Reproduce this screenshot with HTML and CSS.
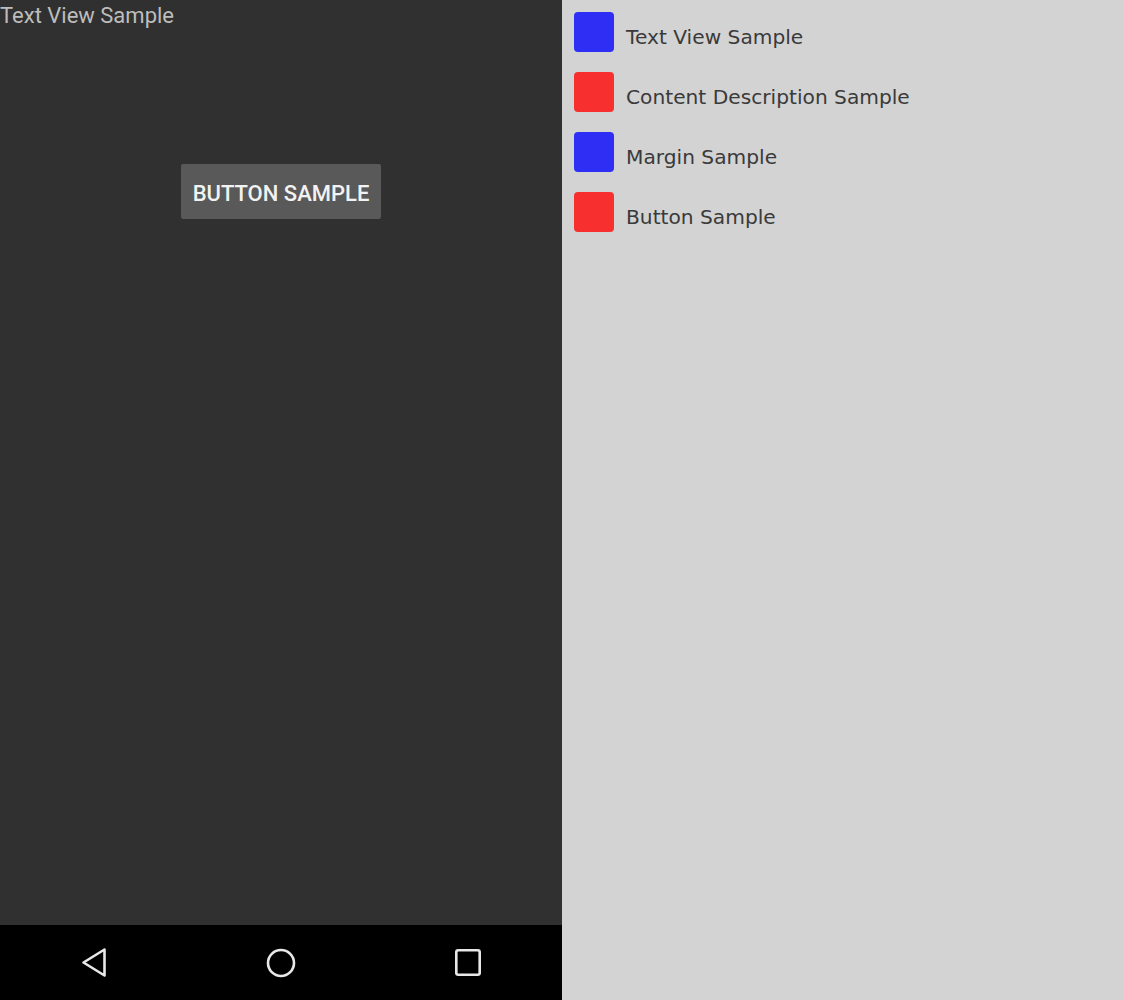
FILE: index.html
```html
<!DOCTYPE html>
<html>
<head>
<meta charset="utf-8">
<link rel="stylesheet" href="styles.css">
</head>
<body>
<div class="app">
  <div class="device">
    <div class="screen">
      <div class="tv">Text View Sample</div>
      <div class="btn-row"><button class="btn">BUTTON SAMPLE</button></div>
    </div>
    <div class="navbar">
      <svg class="nav-icon" width="26" height="31" viewBox="0 0 26 31"><path d="M23.5 2.5 L2.5 15.5 L23.5 28.5 Z" fill="none" stroke="#e8e8e8" stroke-width="2.6" stroke-linejoin="round"/></svg>
      <svg class="nav-icon" width="30" height="30" viewBox="0 0 30 30"><circle cx="15" cy="15" r="13" fill="none" stroke="#e8e8e8" stroke-width="2.6"/></svg>
      <svg class="nav-icon" width="26" height="27" viewBox="0 0 26 27"><rect x="1.3" y="1.3" width="23.4" height="24.4" rx="2" fill="none" stroke="#e8e8e8" stroke-width="2.6"/></svg>
    </div>
  </div>
  <div class="panel">
    <div class="item"><span class="swatch blue"></span><span class="label">Text View Sample</span></div>
    <div class="item"><span class="swatch red"></span><span class="label">Content Description Sample</span></div>
    <div class="item"><span class="swatch blue"></span><span class="label">Margin Sample</span></div>
    <div class="item"><span class="swatch red"></span><span class="label">Button Sample</span></div>
  </div>
</div>
</body>
</html>
```
FILE: styles.css
```css
html, body { margin: 0; padding: 0; }
body { width: 1124px; height: 1000px; overflow: hidden; }
.app { display: flex; width: 1124px; height: 1000px; }
.device { width: 562px; display: flex; flex-direction: column; background: #303030; }
.screen { flex: 1; display: flex; flex-direction: column; }
.tv { font-family: Roboto, sans-serif; font-size: 22px; line-height: 32px; height: 32px; color: #bdbdbd; }
.btn-row { display: flex; justify-content: center; padding-top: 132px; }
.btn { width: 200px; height: 55px; background: #595959; border: none; border-radius: 2px; color: #f2f2f2; font-family: Roboto, sans-serif; font-weight: 500; font-size: 22px; padding: 3px 0 0 0; display: flex; align-items: center; justify-content: center; }
.navbar { height: 75px; background: #000; display: flex; align-items: center; justify-content: space-between; padding: 0 81px; }
.nav-icon { display: block; }
.panel { flex: 1; background: #d3d3d3; padding: 12px 0 0 12px; display: flex; flex-direction: column; gap: 20px; }
.item { display: flex; align-items: center; height: 40px; }
.swatch { width: 40px; height: 40px; border-radius: 4px; flex: none; }
.blue { background: #2e2ef5; }
.red { background: #f72f2f; }
.label { margin-left: 12px; font-family: "DejaVu Sans", sans-serif; font-size: 20.2px; color: #3a3a3a; position: relative; top: 5px; }
```
